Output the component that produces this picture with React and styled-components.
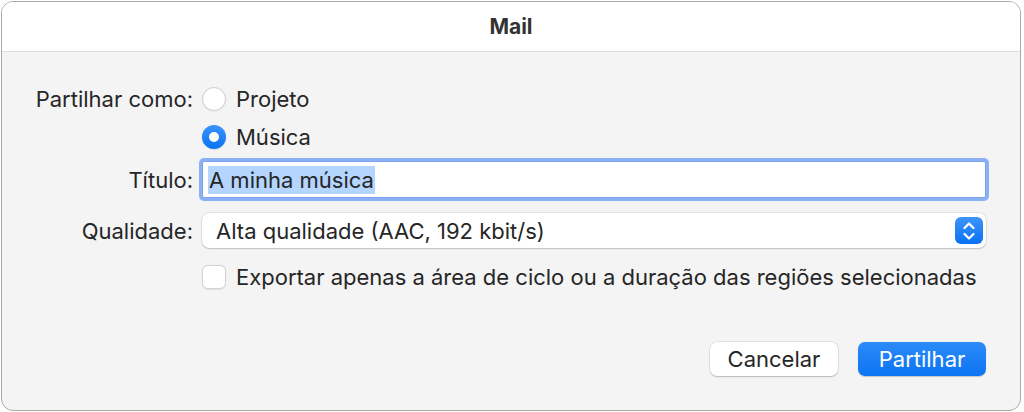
import React from "react";
import styled, { createGlobalStyle } from "styled-components";

const GlobalStyle = createGlobalStyle`
  html, body {
    margin: 0;
    padding: 0;
    background: #ffffff;
  }
  body {
    font-family: Inter, "Liberation Sans", sans-serif;
    color: #262626;
    -webkit-font-smoothing: antialiased;
  }
`;

const Window = styled.div`
  box-sizing: border-box;
  margin: 1px 0 0 1px;
  width: 1020px;
  height: 410px;
  border: 1px solid #aaaaaa;
  border-radius: 12px;
  overflow: hidden;
  display: flex;
  flex-direction: column;
  background: #f4f4f4;
`;

const TitleBar = styled.div`
  height: 49px;
  flex: none;
  background: #ffffff;
  border-bottom: 1px solid #dddddd;
  display: flex;
  align-items: center;
  justify-content: center;
  font-size: 21px;
  font-weight: 700;
  color: #333333;
`;

const Body = styled.div`
  flex: 1;
  display: flex;
  flex-direction: column;
  padding: 35px 34px 34px 0;
`;

const Row = styled.div`
  display: flex;
  align-items: center;
  gap: 9px;
  margin-top: ${(p) => p.$mt || 0}px;
  height: ${(p) => p.$h || 24}px;
  font-size: 22px;
`;

const Label = styled.div`
  width: 191px;
  flex: none;
  text-align: right;
  white-space: nowrap;
`;

const Option = styled.label`
  display: flex;
  align-items: center;
  gap: 10px;
  white-space: nowrap;
`;

const Radio = styled.span`
  box-sizing: border-box;
  width: 24px;
  height: 24px;
  border-radius: 50%;
  flex: none;
  display: flex;
  align-items: center;
  justify-content: center;
  background: ${(p) => (p.$on ? "linear-gradient(#3b93fa, #0b73f3)" : "#ffffff")};
  border: ${(p) => (p.$on ? "none" : "1px solid #cfcfcf")};
  box-shadow: ${(p) => (p.$on ? "0 0.5px 1px rgba(0,0,0,0.2)" : "0 0.5px 1px rgba(0,0,0,0.08)")};

  &::after {
    content: "";
    display: ${(p) => (p.$on ? "block" : "none")};
    width: 10px;
    height: 10px;
    border-radius: 50%;
    background: #ffffff;
  }
`;

const Check = styled.span`
  box-sizing: border-box;
  width: 24px;
  height: 24px;
  border-radius: 6px;
  flex: none;
  background: #ffffff;
  border: 1px solid #d2d2d2;
  box-shadow: 0 0.5px 1px rgba(0, 0, 0, 0.08);
`;

const Field = styled.div`
  box-sizing: border-box;
  flex: 1;
  height: 37px;
  background: #ffffff;
  border: 1px solid #7ea2ee;
  border-radius: 2px;
  box-shadow: 0 0 0 3px #8cb0f6;
  display: flex;
  align-items: center;
  padding-left: 5px;
`;

const Selected = styled.span`
  background: #b4d5fe;
  line-height: 28px;
  padding: 0 1px;
`;

const Select = styled.div`
  box-sizing: border-box;
  flex: 1;
  height: 35px;
  background: #ffffff;
  border-radius: 7px;
  box-shadow: 0 0 0 0.5px rgba(0, 0, 0, 0.14), 0 1px 1.5px rgba(0, 0, 0, 0.16);
  display: flex;
  align-items: center;
  justify-content: space-between;
  padding: 0 3px 0 14px;
`;

const Stepper = styled.span`
  width: 28px;
  height: 27px;
  border-radius: 6px;
  background: linear-gradient(#3d95fb, #0a71f2);
  display: flex;
  align-items: center;
  justify-content: center;
`;

const Footer = styled.div`
  margin-top: auto;
  display: flex;
  justify-content: flex-end;
  gap: 20px;
`;

const Button = styled.button`
  box-sizing: border-box;
  width: 128px;
  height: 34px;
  border: none;
  border-radius: 7px;
  font-family: inherit;
  font-size: 22px;
  padding: 0;
  color: ${(p) => (p.$primary ? "#ffffff" : "#262626")};
  background: ${(p) => (p.$primary ? "linear-gradient(#2a8bf9, #0d73f2)" : "#ffffff")};
  box-shadow: ${(p) =>
    p.$primary
      ? "0 0.5px 1px rgba(0,0,0,0.2)"
      : "0 0 0 0.5px rgba(0,0,0,0.14), 0 1px 1.5px rgba(0,0,0,0.18)"};
`;

function UpDown() {
  return (
    <svg width="14" height="20" viewBox="0 0 14 20" fill="none">
      <path d="M2.5 7 L7 2.5 L11.5 7" stroke="#fff" strokeWidth="2.2" strokeLinecap="round" strokeLinejoin="round" />
      <path d="M2.5 13 L7 17.5 L11.5 13" stroke="#fff" strokeWidth="2.2" strokeLinecap="round" strokeLinejoin="round" />
    </svg>
  );
}

export default function App() {
  return (
    <>
      <GlobalStyle />
      <Window>
        <TitleBar>Mail</TitleBar>
        <Body>
          <Row>
            <Label>Partilhar como:</Label>
            <Option>
              <Radio />
              Projeto
            </Option>
          </Row>
          <Row $mt={14}>
            <Label />
            <Option>
              <Radio $on />
              Música
            </Option>
          </Row>
          <Row $mt={12} $h={37}>
            <Label>Título:</Label>
            <Field>
              <Selected>A minha música</Selected>
            </Field>
          </Row>
          <Row $mt={15} $h={35}>
            <Label>Qualidade:</Label>
            <Select>
              Alta qualidade (AAC, 192 kbit/s)
              <Stepper>
                <UpDown />
              </Stepper>
            </Select>
          </Row>
          <Row $mt={17}>
            <Label />
            <Option>
              <Check />
              Exportar apenas a área de ciclo ou a duração das regiões selecionadas
            </Option>
          </Row>
          <Footer>
            <Button>Cancelar</Button>
            <Button $primary>Partilhar</Button>
          </Footer>
        </Body>
      </Window>
    </>
  );
}
